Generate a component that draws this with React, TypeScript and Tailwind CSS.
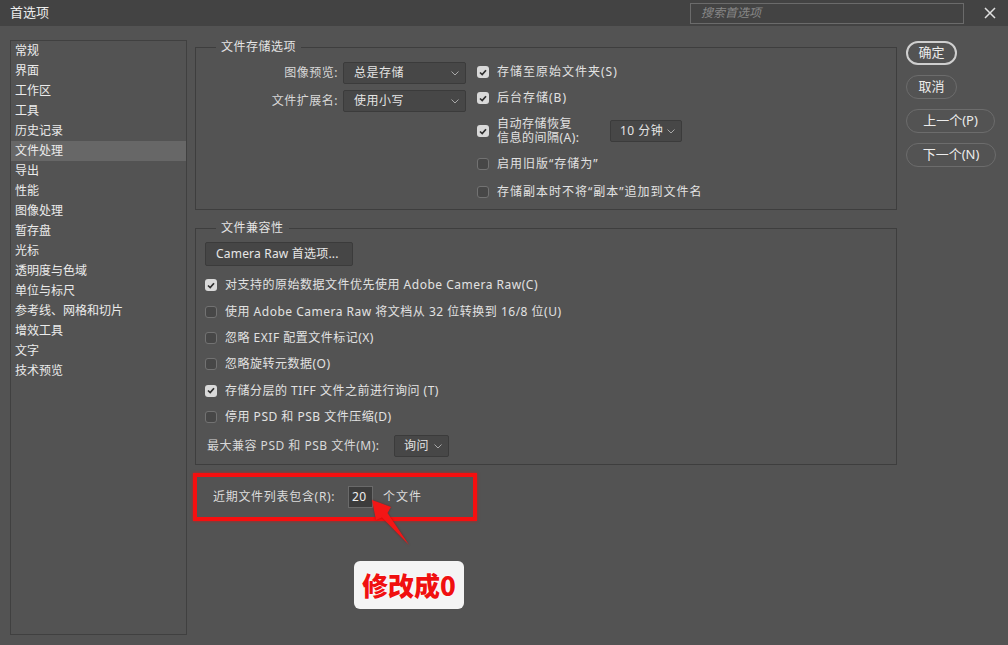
import React from 'react';

const font = { fontFamily: '"Noto Sans", "Noto Sans CJK SC", sans-serif' };

const sidebarItems = [
  '常规', '界面', '工作区', '工具', '历史记录', '文件处理', '导出', '性能', '图像处理',
  '暂存盘', '光标', '透明度与色域', '单位与标尺', '参考线、网格和切片', '增效工具', '文字', '技术预览',
];

const Chevron = () => (
  <svg width="8" height="5" viewBox="0 0 8 5" className="shrink-0">
    <path d="M0.5 0.5 L4 4 L7.5 0.5" fill="none" stroke="#a8a8a8" strokeWidth="1" />
  </svg>
);

const Select = ({ value, className }: { value: string; className: string }) => (
  <div className={`h-[22px] flex items-center justify-between pl-[10px] pr-[6px] bg-[#474747] border border-[#3b3b3b] rounded-[2px] text-[#e4e4e4] ${className}`}>
    <span>{value}</span>
    <Chevron />
  </div>
);

const Checkbox = ({ checked }: { checked: boolean }) =>
  checked ? (
    <span className="w-[12px] h-[12px] shrink-0 rounded-[3px] bg-[#d9d9d9] flex items-center justify-center">
      <svg width="8" height="7" viewBox="0 0 8 7">
        <path d="M1 3.5 L3.2 5.6 L7 1.2" fill="none" stroke="#2e2e2e" strokeWidth="1.7" />
      </svg>
    </span>
  ) : (
    <span className="w-[12px] h-[12px] shrink-0 rounded-[3px] bg-[#474747] border border-[#727272]" />
  );

const CheckRow = ({ checked, label, className = '' }: { checked: boolean; label: string; className?: string }) => (
  <div className={`flex items-center gap-[8px] ${className}`}>
    <Checkbox checked={checked} />
    <span>{label}</span>
  </div>
);

const PillButton = ({ label, primary, width }: { label: string; primary?: boolean; width: string }) => (
  <button
    className={`h-[24px] ${width} rounded-full flex items-center justify-center text-[13px] text-[#ececec] ${
      primary ? 'border-2 border-[#cfcfcf]' : 'border-[1.5px] border-[#6c6c6c]'
    }`}
  >
    {label}
  </button>
);

export default function App() {
  return (
    <div className="relative w-[1008px] h-[645px] bg-[#535353] overflow-hidden text-[12px] text-[#e2e2e2]" style={font}>
      {/* Title bar */}
      <div className="h-[26px] bg-[#434343] flex items-center pl-[10px] pr-[12px]">
        <span className="text-[13px] text-[#ededed]">首选项</span>
        <div className="ml-auto w-[274px] h-[21px] border border-[#6b6b6b] flex items-center pl-[10px] mr-[20px]">
          <span className="italic text-[#878787] text-[12px]">搜索首选项</span>
        </div>
        <svg width="12" height="12" viewBox="0 0 12 12">
          <path d="M1 1 L11 11 M11 1 L1 11" stroke="#e0e0e0" strokeWidth="1.5" />
        </svg>
      </div>

      <div className="flex pl-[10px]">
        {/* Sidebar */}
        <div className="mt-[14px] w-[177px] h-[595px] border border-[#404040] text-[#ebebeb]">
          {sidebarItems.map((item) => (
            <div
              key={item}
              className={`h-[20px] leading-[20px] pl-[4px] ${item === '文件处理' ? 'bg-[#676767]' : ''}`}
            >
              {item}
            </div>
          ))}
        </div>

        {/* Main */}
        <div className="ml-[8px] mt-[13px] w-[702px] tracking-[0.5px]">
          <fieldset className="border border-[#3e3e3e] h-[171px]">
            <legend className="ml-[20px] px-[5px] leading-[16px] text-[#e4e4e4]">文件存储选项</legend>
            <div className="flex pt-[4px]">
              <div className="flex flex-col gap-[6px] pt-[3px]">
                <div className="flex items-center">
                  <span className="w-[142px] text-right text-[#d8d8d8]">图像预览:</span>
                  <Select value="总是存储" className="w-[123px] ml-[5px]" />
                </div>
                <div className="flex items-center">
                  <span className="w-[142px] text-right text-[#d8d8d8]">文件扩展名:</span>
                  <Select value="使用小写" className="w-[123px] ml-[5px]" />
                </div>
              </div>
              <div className="ml-[11px] flex flex-col tracking-[1px]">
                <CheckRow checked label="存储至原始文件夹(S)" className="h-[26px]" />
                <CheckRow checked label="后台存储(B)" className="h-[26px]" />
                <div className="h-[40px] flex items-center gap-[8px]">
                  <Checkbox checked />
                  <div className="w-[105px] flex flex-col tracking-[0.5px]">
                    <span className="h-[14px] leading-[14px]">自动存储恢复</span>
                    <span className="h-[14px] leading-[14px]">信息的间隔(A):</span>
                  </div>
                  <Select value="10 分钟" className="w-[72px] !pl-[9px] tracking-[0.5px]" />
                </div>
                <CheckRow checked={false} label="启用旧版“存储为”" className="h-[26px]" />
                <CheckRow checked={false} label="存储副本时不将“副本”追加到文件名" className="h-[26px] mt-[2px]" />
              </div>
            </div>
          </fieldset>

          <fieldset className="mt-[10px] border border-[#3e3e3e] h-[245px] pl-[9px]">
            <legend className="ml-[11px] px-[5px] leading-[16px] text-[#e4e4e4]">文件兼容性</legend>
            <button className="mt-[6px] w-[148px] h-[24px] bg-[#464646] border border-[#3b3b3b] rounded-[2px] text-[#e6e6e6] text-left pl-[10px] tracking-[0.2px]">
              Camera Raw 首选项...
            </button>
            <div className="mt-[6px] flex flex-col">
              <CheckRow checked label="对支持的原始数据文件优先使用 Adobe Camera Raw(C)" className="h-[26.4px]" />
              <CheckRow checked={false} label="使用 Adobe Camera Raw 将文档从 32 位转换到 16/8 位(U)" className="h-[26.4px]" />
              <CheckRow checked={false} label="忽略 EXIF 配置文件标记(X)" className="h-[26.4px]" />
              <CheckRow checked={false} label="忽略旋转元数据(O)" className="h-[26.4px]" />
              <CheckRow checked label="存储分层的 TIFF 文件之前进行询问 (T)" className="h-[26.4px]" />
              <CheckRow checked={false} label="停用 PSD 和 PSB 文件压缩(D)" className="h-[26.4px]" />
            </div>
            <div className="mt-[5px] flex items-center pl-[2px]">
              <span className="w-[187px] text-[#d8d8d8]">最大兼容 PSD 和 PSB 文件(M):</span>
              <Select value="询问" className="w-[55px] !pl-[9px]" />
            </div>
          </fieldset>

          {/* Recent files row, highlighted */}
          <div className="mt-[8px] -ml-[2px] w-[284px] h-[48px] border-[4px] border-[#f70f0f] shadow-[0_0_3px_rgba(255,0,0,0.6)] flex items-center pl-[16px]">
            <span className="w-[135px] text-[#dcdcdc] tracking-[0.7px]">近期文件列表包含(R):</span>
            <div className="w-[25px] h-[22px] bg-[#3c3c3c] border border-[#6a6a6a] flex items-center pl-[3px] text-[#f0f0f0]">
              20
            </div>
            <span className="ml-[10px] text-[#dcdcdc] tracking-[1px]">个文件</span>
          </div>
        </div>

        {/* Buttons */}
        <div className="ml-[9px] mt-[15px] flex flex-col gap-[10px]">
          <PillButton label="确定" primary width="w-[51px]" />
          <PillButton label="取消" width="w-[51px]" />
          <PillButton label="上一个(P)" width="w-[89px]" />
          <PillButton label="下一个(N)" width="w-[90px]" />
        </div>
      </div>

      {/* Annotation arrow */}
      <svg className="absolute left-0 top-0 pointer-events-none" width="1008" height="645" viewBox="0 0 1008 645">
        <polygon
          points="372,500 391,507 387.5,513 409,545 382,517.6 376,520"
          fill="#f31616"
          style={{ filter: 'drop-shadow(0 0 1px rgba(120,0,0,0.5))' }}
        />
      </svg>

      {/* Annotation label */}
      <div className="absolute left-[354px] top-[561px] w-[110px] h-[48px] rounded-[6px] bg-[#f4f4f4] flex items-center justify-center">
        <span
          className="text-[26px] font-black text-[#f01010] leading-none"
          style={{ fontFamily: '"Noto Sans CJK SC", sans-serif', textShadow: '0 0 2px #fff, 0 0 2px #fff' }}
        >
          修改成0
        </span>
      </div>
    </div>
  );
}
